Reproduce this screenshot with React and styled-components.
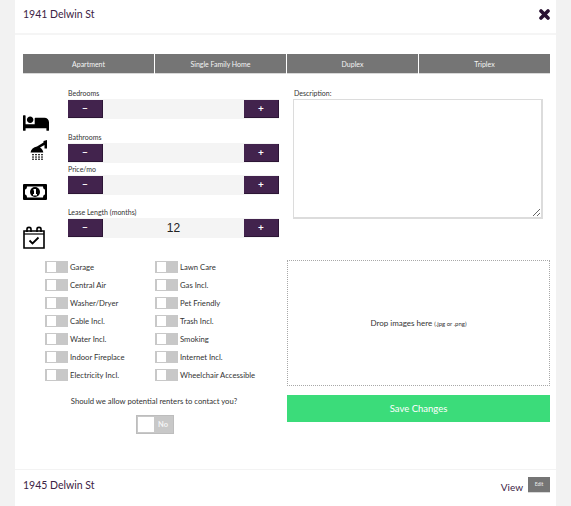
import { createGlobalStyle, styled } from "styled-components";
import { FaBed } from "react-icons/fa";

const GlobalStyle = createGlobalStyle`
  html, body {
    margin: 0;
    padding: 0;
    background: #f2f2f2;
    font-family: Lato, "Open Sans", sans-serif;
    overflow: hidden;
  }
  * {
    box-sizing: border-box;
  }
`;

const CloseIcon = () => (
  <svg width="11" height="11" viewBox="0 0 11 11" stroke="#2a1233" strokeWidth="3.6" strokeLinecap="round">
    <path d="M2 2 L9 9 M9 2 L2 9" />
  </svg>
);

const ShowerIcon = () => (
  <svg width="17" height="20" viewBox="0 0 17 20" fill="#000">
    <path d="M0.5 12.5 C1 9 3.5 7 7 6.5 L13.5 2.5 V1 L17 0 V8.5 H14.5 V5 L10 7.5 C12 8.5 13 10.5 13.3 12.5 Z" />
    {[0, 1, 2, 3].map((col) =>
      [14, 16.4, 18.6].map((y) => <rect key={`${col}-${y}`} x={2.2 + col * 3} y={y} width="1.6" height="1.3" />)
    )}
  </svg>
);

const MoneyIcon = () => (
  <svg width="24" height="16" viewBox="0 0 24 16">
    <rect width="24" height="16" rx="1" fill="#000" />
    <path d="M4 2.5 H20 C20 4.5 21 5.5 22 5.5 V10.5 C21 10.5 20 11.5 20 13.5 H4 C4 11.5 3 10.5 2 10.5 V5.5 C3 5.5 4 4.5 4 2.5 Z" fill="#fff" />
    <circle cx="12" cy="8" r="5" fill="#000" />
    <path d="M10.5 5 H13 V10 H14 V11.5 H10 V10 H11 V6.5 H10.5 Z" fill="#fff" />
  </svg>
);

const CalendarIcon = () => (
  <svg width="22" height="23" viewBox="0 0 22 23" fill="none" stroke="#000">
    <path d="M1 5 H21 V22 H1 Z" strokeWidth="1.6" />
    <path d="M1 8 H21" strokeWidth="1.2" />
    <path d="M4 6 V3 C4 0.8 8 0.8 8 3 V6 M14 6 V3 C14 0.8 18 0.8 18 3 V6" strokeWidth="1.6" />
    <path d="M6.5 14.5 L9.5 17.5 L15.5 11.5" strokeWidth="1.8" />
  </svg>
);

const Panel = styled.div`
  margin: 0 15px;
  width: 541px;
  height: 506px;
  background: #fff;
  color: #2c2c2c;
  opacity: 0.999;
  display: flex;
  flex-direction: column;
`;

const Header = styled.header`
  height: 35px;
  flex: none;
  padding: 0 6px 5px 8px;
  border-bottom: 2px solid #f5f5f5;
  display: flex;
  align-items: center;
  justify-content: space-between;
`;

const Address = styled.h2`
  margin: 0;
  font-size: 10.5px;
  font-weight: 400;
  color: #3c2344;
`;

const CloseButton = styled.span`
  display: flex;
`;

const Body = styled.div`
  padding: 19px 6px 0 8px;
  flex: 1;
`;

const Tabs = styled.div`
  display: grid;
  grid-template-columns: repeat(4, 1fr);
  gap: 1px;
  height: 20px;
`;

const Tab = styled.button`
  border: 0;
  border-bottom: 1px solid #d8d8d8;
  background: #757575;
  color: #f4f4f4;
  font: 7px Lato, sans-serif;
  padding: 0;
`;

const Upper = styled.div`
  display: grid;
  grid-template-columns: 256px 250px;
  gap: 14px;
  margin-top: 14px;
`;

const FieldRow = styled.div`
  display: flex;
  margin-top: ${(p) => p.$top}px;
`;

const IconSlot = styled.div`
  flex: none;
  width: 45px;
  height: 31px;
  padding-top: ${(p) => p.$offset}px;
  padding-left: ${(p) => p.$left || 0}px;
  line-height: 0;
  font-size: 26px;
  color: #000;
`;

const Field = styled.div`
  width: 211px;
`;

const Label = styled.div`
  height: 11px;
  font-size: 7px;
  line-height: 11px;
  padding-left: ${(p) => p.$inset || 0}px;
  color: #333;
`;

const Stepper = styled.div`
  height: 20px;
  display: flex;
  align-items: center;
  justify-content: space-between;
  background: #f4f4f4;
`;

const StepButton = styled.button`
  width: 35px;
  height: 18px;
  border: 0;
  padding: 0 0 1px;
  background: #42234d;
  border-right: 1px solid #2c1535;
  border-bottom: 1px solid #2c1535;
  color: #fff;
  font: 700 10px Lato, sans-serif;
`;

const StepValue = styled.span`
  font: 12px "Liberation Sans", sans-serif;
  color: #222;
`;

const Description = styled.textarea`
  display: block;
  width: 250px;
  height: 120px;
  border: 1px solid #dcdcdc;
  border-width: 1px 2px 2px 1px;
  background: #fff;
  resize: both;
  margin: 0;
`;

const Lower = styled.div`
  display: grid;
  grid-template-columns: 264px 263px;
  margin-top: 22px;
`;

const LeftColumn = styled.div`
  padding-top: 1px;
`;

const Amenities = styled.div`
  display: grid;
  grid-template-columns: 110px 110px;
  grid-auto-rows: 18px;
  padding-left: 22px;
`;

const Amenity = styled.label`
  display: flex;
  align-items: flex-start;
  gap: 2px;
  font-size: 7.7px;
  line-height: 12px;
  color: #333;
  white-space: nowrap;
`;

const SmallToggle = styled.span`
  flex: none;
  width: 23px;
  height: 12px;
  padding: 1px 2px;
  background: #c8c8c8;
  &::before {
    content: "";
    display: block;
    width: 9px;
    height: 10px;
    background: #fff;
  }
`;

const ContactPrompt = styled.p`
  margin: 8px 0 0;
  text-align: center;
  font-size: 7.7px;
  line-height: 12px;
  color: #333;
  padding-right: 2px;
`;

const ContactToggle = styled.div`
  width: 38px;
  height: 19px;
  margin: 8px 0 0 113px;
  padding: 1px;
  border: 1px solid #bdbdbd;
  background: #c8c8c8;
  display: flex;
  align-items: center;
  color: #f4f4f4;
  font-size: 7.5px;
  font-weight: 700;
  &::before {
    content: "";
    width: 16px;
    height: 15px;
    background: #fff;
    margin-right: 4px;
  }
`;

const RightColumn = styled.div`
  display: flex;
  flex-direction: column;
  gap: 9px;
`;

const Dropzone = styled.div`
  height: 126px;
  border: 1px dotted #a8a8a8;
  display: flex;
  align-items: center;
  justify-content: center;
  font-size: 8px;
  color: #333;
  small {
    font-size: 6px;
    margin-left: 2px;
  }
`;

const SaveButton = styled.button`
  height: 27px;
  border: 0;
  background: #3bdc7a;
  color: #fff;
  font: 9.5px Lato, sans-serif;
`;

const Footer = styled.footer`
  flex: none;
  height: 37px;
  border-top: 1px solid #f3f3f3;
  padding: 0 6px 7px 8px;
  display: flex;
  align-items: center;
  justify-content: space-between;
`;

const FooterActions = styled.div`
  display: flex;
  align-items: center;
  gap: 5px;
`;

const ViewLink = styled.span`
  font-size: 10px;
  color: #3c2344;
  margin-top: 4px;
`;

const EditButton = styled.button`
  width: 22px;
  height: 16px;
  border: 0;
  border-bottom: 1px solid #d8d8d8;
  background: #757575;
  color: #eee;
  font: 5px Lato, sans-serif;
  padding: 0;
`;

const fields = [
  { label: "Bedrooms", top: 0, offset: 22, icon: <FaBed /> },
  { label: "Bathrooms", top: 13, offset: 8, left: 7, icon: <ShowerIcon /> },
  { label: "Price/mo", top: 1, offset: 20, icon: <MoneyIcon /> },
  { label: "Lease Length (months)", top: 12, offset: 19, value: 12, icon: <CalendarIcon /> },
];

const amenities = [
  "Garage", "Lawn Care",
  "Central Air", "Gas Incl.",
  "Washer/Dryer", "Pet Friendly",
  "Cable Incl.", "Trash Incl.",
  "Water Incl.", "Smoking",
  "Indoor Fireplace", "Internet Incl.",
  "Electricity Incl.", "Wheelchair Accessible",
];

const App = () => {
  return (
    <>
      <GlobalStyle />
      <Panel>
        <Header>
          <Address>1941 Delwin St</Address>
          <CloseButton><CloseIcon /></CloseButton>
        </Header>
        <Body>
          <Tabs>
            <Tab>Apartment</Tab>
            <Tab>Single Family Home</Tab>
            <Tab>Duplex</Tab>
            <Tab>Triplex</Tab>
          </Tabs>
          <Upper>
            <div>
              {fields.map((f) => (
                <FieldRow key={f.label} $top={f.top}>
                  <IconSlot $offset={f.offset} $left={f.left}>{f.icon}</IconSlot>
                  <Field>
                    <Label>{f.label}</Label>
                    <Stepper>
                      <StepButton>−</StepButton>
                      <StepValue>{f.value}</StepValue>
                      <StepButton>+</StepButton>
                    </Stepper>
                  </Field>
                </FieldRow>
              ))}
            </div>
            <div>
              <Label $inset={1}>Description:</Label>
              <Description />
            </div>
          </Upper>
          <Lower>
            <LeftColumn>
              <Amenities>
                {amenities.map((name) => (
                  <Amenity key={name}>
                    <SmallToggle />
                    {name}
                  </Amenity>
                ))}
              </Amenities>
              <ContactPrompt>Should we allow potential renters to contact you?</ContactPrompt>
              <ContactToggle>No</ContactToggle>
            </LeftColumn>
            <RightColumn>
              <Dropzone>Drop images here <small>(.jpg or .png)</small></Dropzone>
              <SaveButton>Save Changes</SaveButton>
            </RightColumn>
          </Lower>
        </Body>
        <Footer>
          <Address>1945 Delwin St</Address>
          <FooterActions>
            <ViewLink>View</ViewLink>
            <EditButton>Edit</EditButton>
          </FooterActions>
        </Footer>
      </Panel>
    </>
  );
};

export default App;
